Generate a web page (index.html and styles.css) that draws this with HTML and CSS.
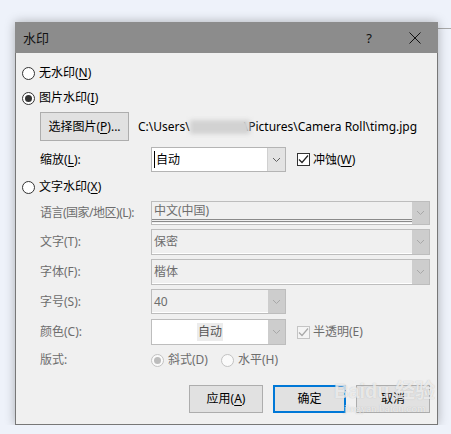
FILE: index.html
```html
<!DOCTYPE html>
<html lang="zh-CN">

<head>
    <meta charset="UTF-8" />
    <title>水印</title>
    <link rel="stylesheet" href="styles.css">
</head>

<body>
    <div class="behind"></div>

    <div class="dialog">
        <div class="titlebar">
            <span class="title">水印</span>
            <span class="help">?</span>
            <svg class="close" width="12" height="12" viewBox="0 0 12 12">
                <path d="M0.5 0.5 L11.5 11.5 M11.5 0.5 L0.5 11.5" stroke="#111" stroke-width="1" fill="none" />
            </svg>
        </div>

        <div class="content">
            <div class="row r-none">
                <span class="radio"></span>
                <span>无水印(<u>N</u>)</span>
            </div>

            <div class="row r-pic">
                <span class="radio checked"></span>
                <span>图片水印(<u>I</u>)</span>
            </div>

            <div class="row r-file">
                <button class="btn pick">选择图片(<u>P</u>)...</button>
                <span class="path">C:\Users\<span class="blur"></span>\Pictures\Camera Roll\timg.jpg</span>
            </div>

            <div class="row field r-scale">
                <span class="label">缩放(<u>L</u>):</span>
                <div class="combo narrow">
                    <span class="value"><i class="caret"></i>自动</span>
                    <span class="drop"><svg width="7" height="4" viewBox="0 0 7 4"><path d="M0 0 L3.5 3.5 L7 0" stroke="#606060" fill="none" /></svg></span>
                </div>
                <span class="check on"><svg width="11" height="11" viewBox="0 0 11 11"><path d="M1 5.5 L4 8.5 L10 1.5" stroke="#222" stroke-width="1.2" fill="none" /></svg></span>
                <span>冲蚀(<u>W</u>)</span>
            </div>

            <div class="row r-text">
                <span class="radio"></span>
                <span>文字水印(<u>X</u>)</span>
            </div>

            <!-- disabled text watermark options -->
            <div class="row field off r-lang">
                <span class="label tight">语言(国家/地区)(L):</span>
                <div class="combo wide">
                    <span class="value dbl">中文(中国)</span>
                    <span class="drop"><svg width="7" height="4" viewBox="0 0 7 4"><path d="M0 0 L3.5 3.5 L7 0" stroke="#a8a8a8" fill="none" /></svg></span>
                </div>
            </div>

            <div class="row field off r-word">
                <span class="label">文字(T):</span>
                <div class="combo wide">
                    <span class="value">保密</span>
                    <span class="drop"><svg width="7" height="4" viewBox="0 0 7 4"><path d="M0 0 L3.5 3.5 L7 0" stroke="#a8a8a8" fill="none" /></svg></span>
                </div>
            </div>

            <div class="row field off r-font">
                <span class="label">字体(F):</span>
                <div class="combo wide">
                    <span class="value">楷体</span>
                    <span class="drop"><svg width="7" height="4" viewBox="0 0 7 4"><path d="M0 0 L3.5 3.5 L7 0" stroke="#a8a8a8" fill="none" /></svg></span>
                </div>
            </div>

            <div class="row field off r-size">
                <span class="label">字号(S):</span>
                <div class="combo narrow">
                    <span class="value">40</span>
                    <span class="drop"><svg width="7" height="4" viewBox="0 0 7 4"><path d="M0 0 L3.5 3.5 L7 0" stroke="#a8a8a8" fill="none" /></svg></span>
                </div>
            </div>

            <div class="row field off r-color">
                <span class="label">颜色(C):</span>
                <div class="combo narrow white">
                    <span class="value center"><span class="auto">自动</span></span>
                    <span class="drop"><svg width="7" height="4" viewBox="0 0 7 4"><path d="M0 0 L3.5 3.5 L7 0" stroke="#a8a8a8" fill="none" /></svg></span>
                </div>
                <span class="check dim"><svg width="11" height="11" viewBox="0 0 11 11"><path d="M1 5.5 L4 8.5 L10 1.5" stroke="#a8a8a8" stroke-width="1.2" fill="none" /></svg></span>
                <span>半透明(E)</span>
            </div>

            <div class="row field off r-layout">
                <span class="label">版式:</span>
                <span class="radio dim checked"></span>
                <span class="opt">斜式(D)</span>
                <span class="radio dim"></span>
                <span class="opt">水平(H)</span>
            </div>

            <div class="row r-buttons">
                <button class="btn">应用(<u>A</u>)</button>
                <button class="btn default">确定</button>
                <button class="btn">取消</button>
            </div>
        </div>

        <!-- site watermark over the corner -->
        <div class="stamp">
            <span class="big">Baidu 经验</span>
            <span class="small">jingyan.baidu.com</span>
        </div>
    </div>
</body>

</html>
```

FILE: styles.css
```css
body {
    margin: 0;
    background-color: #eef2fa;
    font-family: "Noto Sans", "Noto Sans CJK SC", sans-serif;
    font-size: 12px;
    color: #000;
    overflow: hidden;
}

.behind {
    position: absolute;
    left: 437px;
    top: 28px;
    width: 14px;
    height: 1px;
    background-color: #a9a9a9;
}

.dialog {
    position: relative;
    box-sizing: border-box;
    margin: 22px 0 0 15px;
    width: 423px;
    height: 403px;
    background-color: #f0f0f0;
    border: 1px solid #777;
    border-top: none;
    box-shadow: 0 0 10px rgba(0, 0, 0, 0.28);
}

.titlebar {
    display: flex;
    align-items: center;
    height: 31px;
    margin: 0 -1px;
    padding-left: 8px;
    background-color: #8c8c8c;
}

.title {
    flex: 1;
    font-size: 13px;
    color: #111;
}

.help {
    margin-right: 37px;
    font-size: 13px;
    color: #111;
}

.close {
    margin-right: 17px;
}

.content {
    padding: 10px 7px 0 6px;
}

.row {
    display: flex;
    align-items: center;
    height: 20px;
    line-height: 16px;
    white-space: nowrap;
}

.r-pic {
    margin-top: 5px;
}

.r-file {
    margin-top: 4px;
    height: 29px;
    padding-left: 18px;
}

.r-scale {
    margin-top: 6px;
    height: 25px;
}

.r-text {
    margin-top: 5px;
}

.r-lang {
    margin-top: 4px;
    height: 24px;
}

.r-word,
.r-font {
    margin-top: 4px;
    height: 26px;
}

.r-size {
    margin-top: 4px;
    height: 25px;
}

.r-color {
    margin-top: 5px;
    height: 26px;
}

.r-layout {
    margin-top: 5px;
}

.r-buttons {
    margin-top: 15px;
    height: 28px;
    justify-content: flex-end;
    gap: 10px;
}

u {
    text-decoration-thickness: 1px;
    text-underline-offset: 2px;
}

/* radio buttons */
.radio {
    position: relative;
    box-sizing: border-box;
    width: 13px;
    height: 13px;
    margin-right: 4px;
    border: 1px solid #333;
    border-radius: 50%;
    background-color: #fff;
    flex: none;
}

.radio.checked::after {
    content: "";
    position: absolute;
    left: 2px;
    top: 2px;
    width: 7px;
    height: 7px;
    border-radius: 50%;
    background-color: #333;
}

.radio.dim {
    border-color: #c2c2c2;
    background-color: #fafafa;
}

.radio.dim.checked::after {
    background-color: #bcbcbc;
}

/* check boxes */
.check {
    box-sizing: border-box;
    display: flex;
    align-items: center;
    justify-content: center;
    width: 13px;
    height: 13px;
    margin: 0 3px 0 11px;
    border: 1px solid #333;
    background-color: #fff;
}

.check.dim {
    border-color: #c4c4c4;
    background-color: #f4f4f4;
}

/* push buttons */
.btn {
    box-sizing: border-box;
    height: 28px;
    width: 74px;
    padding: 0;
    font: inherit;
    color: #000;
    background-color: #e1e1e1;
    border: 1px solid #adadad;
}

.btn.default {
    width: 73px;
    border: 2px solid #0078d7;
}

.btn.pick {
    width: 89px;
    height: 29px;
}

.path {
    margin-left: 9px;
}

.blur {
    position: relative;
    z-index: 1;
    display: inline-block;
    width: 60px;
    height: 14px;
    margin-right: -6px;
    vertical-align: -3px;
    background-color: #d2d2d2;
    filter: blur(2px);
}

/* labelled fields */
.field {
    padding-left: 18px;
}

.label {
    width: 111px;
    flex: none;
}

.label.tight {
    letter-spacing: -0.5px;
}

.off {
    color: #6d6d6d;
}

.combo {
    box-sizing: border-box;
    display: flex;
    height: 100%;
    border: 1px solid #b4b4b4;
    background-color: #fff;
}

.combo.wide {
    width: 280px;
}

.combo.narrow {
    width: 135px;
}

.off .combo {
    border-color: #bdbdbd;
    background-color: #f0f0f0;
    box-shadow: inset 0 -1px 0 #fff;
}

.off .combo.white {
    background-color: #fff;
    box-shadow: none;
}

.value {
    flex: 1;
    display: flex;
    align-items: center;
    padding-left: 2px;
}

.value.center {
    justify-content: center;
    padding-left: 0;
}

.value.dbl {
    margin-bottom: 2px;
    border-bottom: 3px double #8a8a8a;
}

.caret {
    width: 1px;
    height: 17px;
    margin-right: 1px;
    background-color: #000;
}

.auto {
    padding: 1px 1px;
    background-color: #ececec;
    color: #555;
}

.drop {
    display: flex;
    align-items: center;
    justify-content: center;
    width: 17px;
    background-color: #e3e3e3;
    border-left: 1px solid #d0d0d0;
}

.off .drop {
    background-color: #cdcdcd;
    border-left: none;
}

.opt {
    margin-right: 13px;
}

/* watermark of the screenshot source */
.stamp {
    position: absolute;
    left: 318px;
    top: 358px;
    display: flex;
    flex-direction: column;
    align-items: center;
    color: rgba(255, 255, 255, 0.7);
    text-shadow: 0 0 1px rgba(140, 140, 140, 0.55);
    pointer-events: none;
}

.stamp .big {
    font-family: "Liberation Sans", "Noto Sans CJK SC", sans-serif;
    font-size: 20px;
    font-weight: bold;
    line-height: 22px;
}

.stamp .small {
    font-family: "Liberation Serif", serif;
    font-size: 11px;
    line-height: 12px;
}
```
